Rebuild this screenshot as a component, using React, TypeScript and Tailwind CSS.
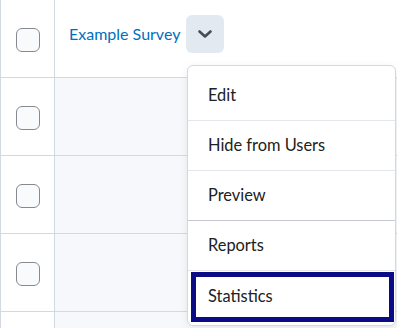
import React from "react";

function Checkbox() {
  return <div className="h-6 w-6 rounded-[6px] border-[1.5px] border-[#86898f] bg-[#f9fafb]" />;
}

function Row({ first, children }: { first?: boolean; children?: React.ReactNode }) {
  return (
    <div className="flex h-[78px] border-b border-[#d3d9e3]">
      <div className="flex w-[54px] shrink-0 items-center justify-center border-r border-[#d3d9e3] bg-white pt-[3px]">
        <Checkbox />
      </div>
      <div className={first ? "flex-1 bg-white" : "flex-1 bg-[#f6f8fb]"}>{children}</div>
    </div>
  );
}

const items = [
  { label: "Edit", divider: "border-[#e3e6ea]" },
  { label: "Hide from Users", divider: "border-[#e3e6ea]" },
  { label: "Preview", divider: "border-[#c6cad0]" },
  { label: "Reports", divider: "border-[#e3e6ea]" },
];

export default function App() {
  return (
    <div
      className="relative h-[328px] w-[397px] overflow-hidden bg-white"
      style={{ fontFamily: "Lato, 'Noto Sans', sans-serif" }}
    >
      <div className="border-l border-[#d3d9e3]">
        <Row first>
          <div className="flex items-center gap-[6px] pl-[14px] pt-[15px]">
            <a className="text-[16px] text-[#006fbf]">Example Survey</a>
            <div className="flex h-[38px] w-[38px] items-center justify-center rounded-[6px] bg-[#e3e9f1]">
              <svg width="14" height="8" viewBox="0 0 14 8" fill="none">
                <path d="M1.5 1.5L7 6.5L12.5 1.5" stroke="#494c50" strokeWidth="2.6" strokeLinecap="round" strokeLinejoin="round" />
              </svg>
            </div>
          </div>
        </Row>
        <Row />
        <Row />
        <Row />
        <Row />
      </div>

      <div className="absolute left-[187px] top-[65px] w-[209px] rounded-[6px] border border-[#d3d9e3] bg-white pt-[5px] shadow-[0_2px_8px_rgba(0,0,0,0.08)]">
        {items.map((it) => (
          <div
            key={it.label}
            className={`flex h-[50px] items-center border-b pl-[20px] text-[16.4px] text-[#202122] ${it.divider}`}
          >
            {it.label}
          </div>
        ))}
        <div className="relative flex h-[50px] items-center pl-[20px] text-[16.4px] text-[#202122]">
          <span className="pointer-events-none absolute bottom-[-1px] left-[3px] right-[1px] top-[1px] border-[5px] border-[#0b0b85]" />
          Statistics
        </div>
        <div className="h-[4px]" />
      </div>
    </div>
  );
}
